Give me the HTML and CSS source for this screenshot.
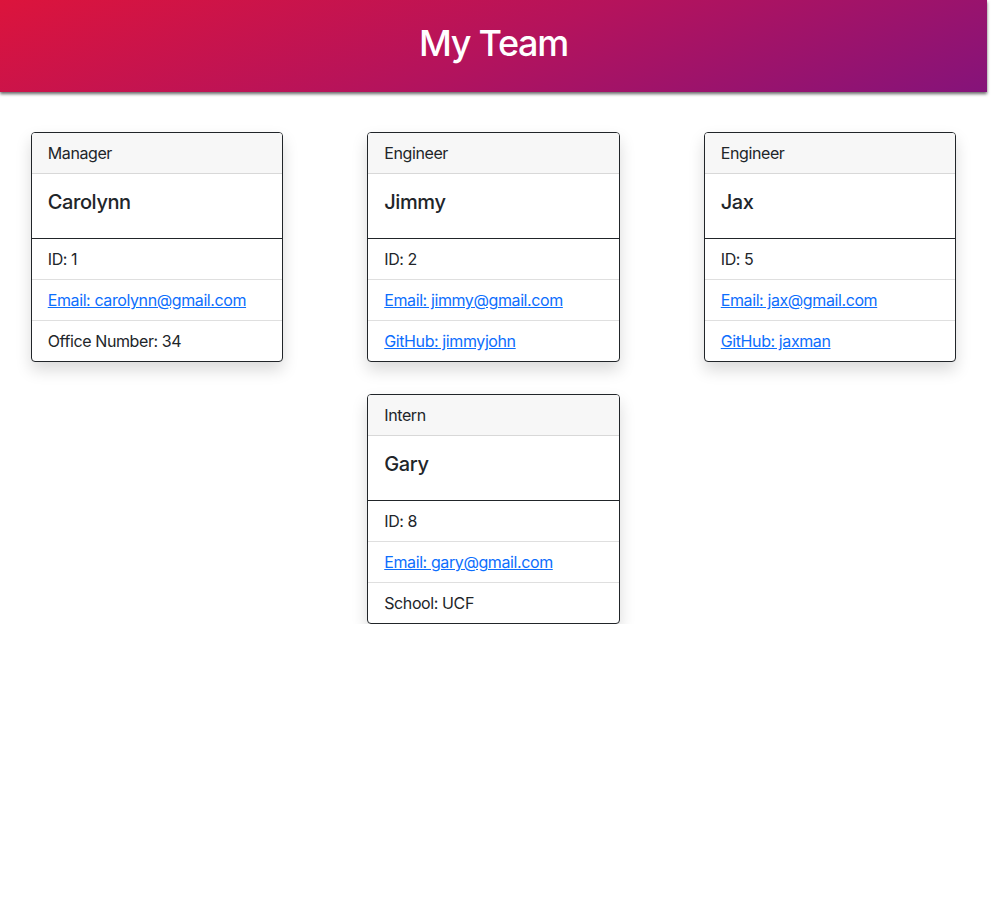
FILE: index.html
```html
<!DOCTYPE html>
<html lang="en">
<head>
<meta charset="utf-8">
<title>My Team</title>
<link rel="stylesheet" href="styles.css">
</head>
<body>
<div class="page">
  <header class="banner">
    <h1 class="banner-title">My Team</h1>
  </header>
  <main class="team">
    <div class="card">
      <div class="card-header">Manager</div>
      <div class="card-body"><h5 class="card-title">Carolynn</h5></div>
      <ul class="list">
        <li class="item">ID: 1</li>
        <li class="item"><a href="#">Email: carolynn@gmail.com</a></li>
        <li class="item">Office Number: 34</li>
      </ul>
    </div>
    <div class="card">
      <div class="card-header">Engineer</div>
      <div class="card-body"><h5 class="card-title">Jimmy</h5></div>
      <ul class="list">
        <li class="item">ID: 2</li>
        <li class="item"><a href="#">Email: jimmy@gmail.com</a></li>
        <li class="item"><a href="#">GitHub: jimmyjohn</a></li>
      </ul>
    </div>
    <div class="card">
      <div class="card-header">Engineer</div>
      <div class="card-body"><h5 class="card-title">Jax</h5></div>
      <ul class="list">
        <li class="item">ID: 5</li>
        <li class="item"><a href="#">Email: jax@gmail.com</a></li>
        <li class="item"><a href="#">GitHub: jaxman</a></li>
      </ul>
    </div>
    <div class="card">
      <div class="card-header">Intern</div>
      <div class="card-body"><h5 class="card-title">Gary</h5></div>
      <ul class="list">
        <li class="item">ID: 8</li>
        <li class="item"><a href="#">Email: gary@gmail.com</a></li>
        <li class="item">School: UCF</li>
      </ul>
    </div>
  </main>
</div>
</body>
</html>
```
FILE: styles.css
```css
* { box-sizing: border-box; }
html, body { margin: 0; padding: 0; background: #fff; }
body {
  font-family: "Inter", "Liberation Sans", sans-serif;
  font-size: 16px;
  line-height: 24px;
  letter-spacing: -0.4px;
  color: #212529;
}
.page { width: 987px; }
.banner {
  height: 92px;
  background: linear-gradient(160deg, #dc143c 0%, #b5135c 50%, #85137a 100%);
  box-shadow: 0 2px 3px rgba(0,0,0,0.6);
  display: flex;
  align-items: center;
  justify-content: center;
  position: relative;
}
.banner-title {
  margin: 0;
  color: #fff;
  font-size: 36px;
  font-weight: 500;
  letter-spacing: -1.3px;
  line-height: 44px;
  padding-bottom: 6px;
}
.team {
  display: flex;
  flex-wrap: wrap;
  justify-content: center;
  column-gap: 84px;
  row-gap: 32px;
  padding-top: 40px;
}
.card {
  width: 252.5px;
  border: 1px solid #212529;
  border-radius: 4px;
  background: #fff;
  box-shadow: 0 8px 16px rgba(0,0,0,0.15);
  overflow: hidden;
}
.card-header {
  background: #f7f7f7;
  padding: 8px 16px;
  border-bottom: 1px solid rgba(0,0,0,0.125);
}
.card-body { padding: 16px; }
.card-title {
  margin: 0 0 8px;
  font-size: 20px;
  font-weight: 500;
  letter-spacing: -0.4px;
  line-height: 24px;
}
.list {
  list-style: none;
  margin: 0;
  padding: 0;
  border-top: 1px solid #212529;
}
.item {
  padding: 8px 16px;
  border-top: 1px solid rgba(0,0,0,0.125);
}
.item:first-child { border-top: 0; }
.item a { color: #0d6efd; text-decoration: underline; }
```
